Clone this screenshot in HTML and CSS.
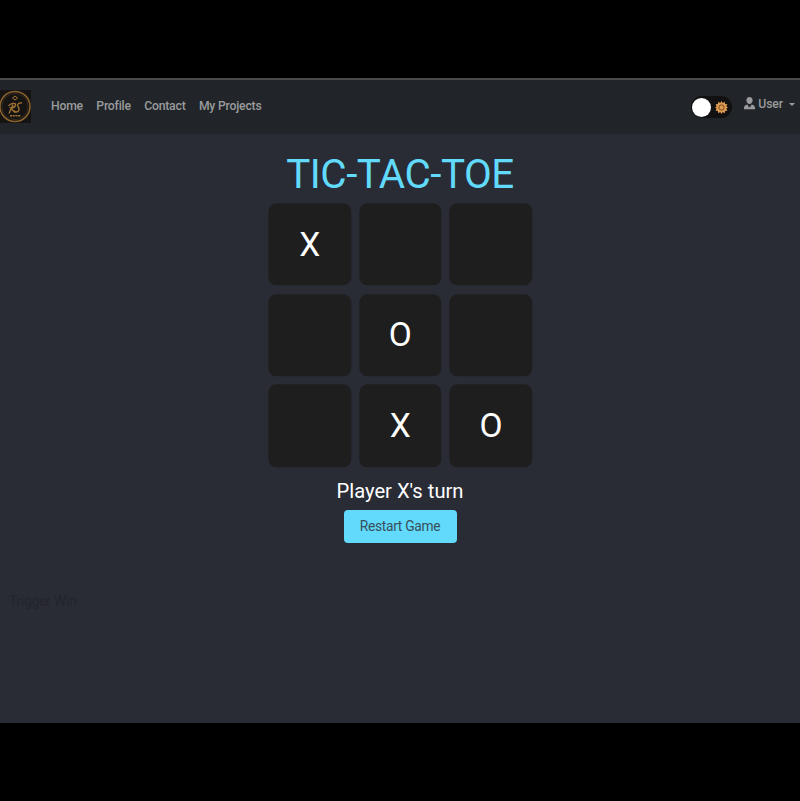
FILE: index.html
```html
<!DOCTYPE html>
<html lang="en">
<head>
<meta charset="utf-8">
<title>Tic-Tac-Toe</title>
<link rel="stylesheet" href="styles.css">
</head>
<body>
<div class="app">
  <header class="navbar">
    <svg class="logo" viewBox="0 0 32 33" fill="none" stroke="#a47435">
      <rect width="31" height="33" fill="#151413" stroke="none"/>
      <circle cx="15" cy="16.5" r="15" stroke="#8b632f" stroke-width="1.5"/>
      <circle cx="15" cy="16.5" r="13.1" stroke="#4d3a23" stroke-width=".6"/>
      <path d="M15 6l2.500 2L15 10l-2.500-2z" stroke-width="1"/>
      <path d="M9 23.500l4-9M8.500 16c2-3 7.500-3.500 7-1-.4 2-3 3-5 3l4.500 4.500M22 13c-3-.5-5.500 1.500-4 3.500 2 2 1 5.500-1.500 5.500-1 0-2-.5-2.500-1.500" stroke-width="1.300"/>
      <path d="M10 25.800h11" stroke-width="1.400" stroke-dasharray="2 .7"/>
    </svg>
    <nav class="links">
      <a>Home</a><a>Profile</a><a>Contact</a><a>My Projects</a>
    </nav>
    <div class="toggle">
      <span class="knob"></span>
      <svg class="sun" viewBox="0 0 14 14">
        <path fill="#dc9a52" d="M7 0l1.400 2.100L10.500.900l.4 2.300 2.400.4-1 2.200L14 7l-1.700 1.200 1 2.200-2.400.4-.4 2.300-2.100-1.200L7 14l-1.400-2.100-2.100 1.200-.4-2.300-2.400-.4 1-2.200L0 7l1.700-1.200-1-2.200 2.400-.4.4-2.300 2.100 1.200z"/>
        <circle cx="7" cy="7" r="2.800" fill="#dc9a52" stroke="#704719" stroke-width="1"/>
      </svg>
    </div>
    <div class="user">
      <svg class="person" viewBox="0 0 11 13" fill="#9a9b9c">
        <path d="M5.500 0C3.600 0 2.400 1.300 2.400 3.200S3.600 7 5.500 7s3.100-1.900 3.100-3.800S7.400 0 5.500 0zM3.500 7.500l1.500 3.200L5.500 9l.5 1.700 1.500-3.200C9.800 8 11 9.300 11 11v1.200H0V11c0-1.700 1.200-3 3.500-3.500z"/>
      </svg>
      <span>User</span>
      <span class="caret"></span>
    </div>
  </header>
  <main class="game">
    <h1>TIC-TAC-TOE</h1>
    <div class="board">
      <div class="cell">X</div><div class="cell"></div><div class="cell"></div>
      <div class="cell"></div><div class="cell">O</div><div class="cell"></div>
      <div class="cell"></div><div class="cell">X</div><div class="cell">O</div>
    </div>
    <p class="status">Player X's turn</p>
    <button class="restart">Restart Game</button>
  </main>
  <div class="trigger">Trigger Win</div>
</div>
</body>
</html>
```
FILE: styles.css
```css
* { box-sizing: border-box; }
body {
  margin: 0;
  padding-top: 78px;
  height: 801px;
  background: #000;
  font-family: Roboto, "Liberation Sans", sans-serif;
  overflow: hidden;
}
.app { height: 645px; background: #2a2c35; }
.navbar {
  display: flex;
  height: 56px;
  border-top: 2px solid #4b4a48;
  background: #212529;
  color: #9a9b9c;
  font-size: 12.2px;
  font-weight: 500;
  line-height: 16px;
}
.logo { width: 32px; height: 33px; margin-top: 10px; }
.links { display: flex; gap: 13.4px; margin: 18px 0 0 19px; letter-spacing: -.2px; }
.toggle {
  display: flex;
  align-items: center;
  justify-content: space-between;
  width: 41px;
  height: 22px;
  margin: 16px 12px 0 auto;
  padding: 0 4px 0 1px;
  border-radius: 11px;
  background: #111;
}
.knob { width: 19px; height: 19px; border-radius: 50%; background: #fff; }
.sun { width: 13px; height: 13px; }
.user { display: flex; margin: 16px 5px 0 0; letter-spacing: -.1px; }
.person { width: 11px; height: 13px; margin: 1px 3px 0 0; }
.caret {
  width: 6px;
  height: 3px;
  margin: 7px 0 0 6px;
  border: 3px solid transparent;
  border-top: 3px solid #9a9b9c;
  border-bottom: 0;
}
.game { display: flex; flex-direction: column; align-items: center; }
h1 {
  margin: 17px 0 4px;
  font-size: 40.4px;
  font-weight: 400;
  line-height: 48px;
  letter-spacing: -.5px;
  color: #61dafb;
}
.board {
  display: grid;
  grid-template-columns: repeat(3, 82.4px);
  grid-auto-rows: 82.4px;
  gap: 8.24px;
  transform: translate(.3px, .3px);
}
.cell {
  display: flex;
  align-items: center;
  justify-content: center;
  border-radius: 8px;
  background: #1e1e1e;
  color: #fff;
  font-size: 33.5px;
}
.status {
  margin: 12px 0 7.4px;
  color: #fff;
  font-size: 20.2px;
  font-weight: 400;
  line-height: 24px;
}
.restart {
  width: 113px;
  height: 33px;
  padding: 0 0 1px;
  border: 0;
  border-radius: 4px;
  background: #61dafb;
  color: #38505c;
  font: 400 13.8px Roboto, "Liberation Sans", sans-serif;
  letter-spacing: -.3px;
}
.trigger {
  margin: 48px 0 0 9px;
  color: #22252b;
  font-size: 13.8px;
  line-height: 20px;
  letter-spacing: -.2px;
}
```
